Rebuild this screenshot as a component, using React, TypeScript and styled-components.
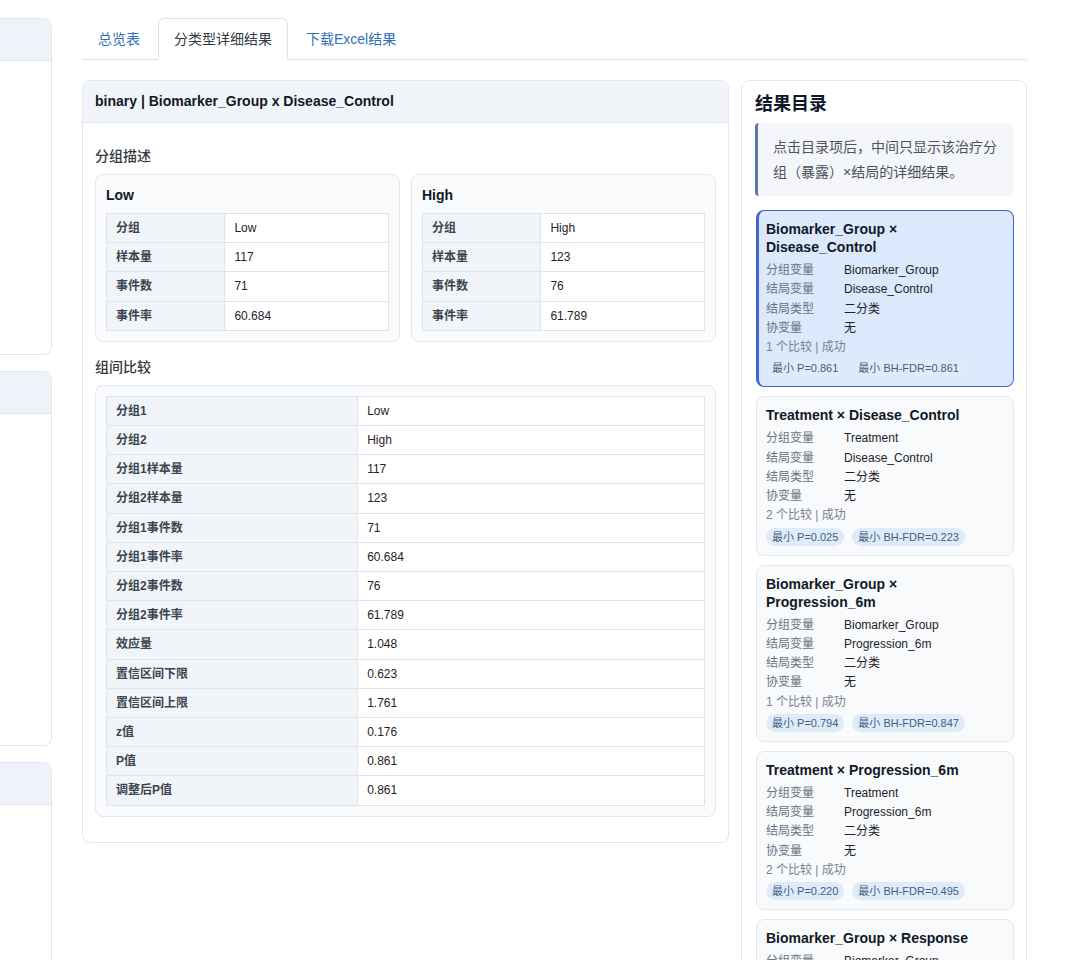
import React from 'react'
import styled, { createGlobalStyle } from 'styled-components';

const GlobalStyle = createGlobalStyle`
  body {
    margin: 0;
    background: #fff;
    color: #1f2328;
    font-family: "Liberation Sans", "Noto Sans CJK SC", sans-serif;
  }
  * { box-sizing: border-box; }
`;

const Page = styled.div`
  display: flex;
  gap: 30px;
  width: 1090px;
  height: 960px;
  padding-top: 18px;
  overflow: hidden;
`;

const SideColumn = styled.div`
  width: 52px;
  flex-shrink: 0;
  display: flex;
  flex-direction: column;
  gap: 16px;
`;

const SidePanel = styled.div<{ h: number }>`
  height: ${props => props.h}px;
  flex-shrink: 0;
  border: 1px solid #e2e7ee;
  border-left: none;
  border-radius: 0 8px 8px 0;
`;

const SidePanelHeader = styled.div`
  height: 42px;
  background: #eef3f9;
  border-bottom: 1px solid #e2e7ee;
  border-radius: 0 8px 0 0;
`;

const Content = styled.div`
  width: 945px;
  flex-shrink: 0;
`;

const Tabs = styled.div`
  display: flex;
  gap: 2px;
  border-bottom: 1px solid #dee2e6;
`;

const Tab = styled.div<{ active?: boolean }>`
  padding: 10px 15px;
  font-size: 14px;
  line-height: 20px;
  margin-bottom: -1px;
  border: 1px solid ${props => props.active ? '#dee2e6' : 'transparent'};
  border-bottom-color: ${props => props.active ? '#fff' : 'transparent'};
  border-radius: 6px 6px 0 0;
  background: ${props => props.active ? '#fff' : 'transparent'};
  color: ${props => props.active ? '#333a42' : '#3470b8'};
`;

const Body = styled.div`
  display: flex;
  align-items: flex-start;
  gap: 12px;
  margin-top: 20px;
`;

const ResultCard = styled.div`
  flex: 1;
  border: 1px solid #e2e7ee;
  border-radius: 8px;
  overflow: hidden;
`;

const ResultHeader = styled.div`
  padding: 12px;
  background: #f1f5f9;
  border-bottom: 1px solid #e2e7ee;
  font-size: 14px;
  line-height: 17px;
  font-weight: bold;
  color: #111827;
`;

const ResultBody = styled.div`
  padding: 23px 12px 25px;
`;

const SectionTitle = styled.div<{ first?: boolean }>`
  margin: ${props => props.first ? 0 : 15}px 0 8px;
  font-size: 14px;
  line-height: 20px;
  font-weight: 500;
  color: #333a42;
`;

const GroupGrid = styled.div`
  display: grid;
  grid-template-columns: 1fr 1fr;
  gap: 11px;
`;

const InnerCard = styled.div`
  padding: 10px;
  background: #f9fbfd;
  border: 1px solid #e2e7ee;
  border-radius: 8px;
`;

const GroupName = styled.div`
  margin-bottom: 8px;
  font-size: 14px;
  line-height: 20px;
  font-weight: bold;
  color: #111827;
`;

const KvTable = styled.table`
  width: 100%;
  border-collapse: collapse;
  background: #fff;
  font-size: 12px;
  line-height: 16.2px;
`;

const LabelCell = styled.th`
  width: 42%;
  padding: 6px 9px;
  text-align: left;
  font-weight: 600;
  color: #3b4450;
  background: #f1f4f8;
  border: 1px solid #dfe4ea;
`;

const ValueCell = styled.td`
  padding: 6px 9px;
  color: #1f2328;
  border: 1px solid #dfe4ea;
`;

const Catalog = styled.div`
  width: 286px;
  flex-shrink: 0;
  padding: 11px 12px 40px 13px;
  border: 1px solid #e2e7ee;
  border-radius: 8px;
`;

const CatalogTitle = styled.div`
  margin-bottom: 7px;
  font-size: 18px;
  line-height: 24px;
  font-weight: bold;
  color: #111827;
`;

const Note = styled.div`
  padding: 12px 12px 11px 15px;
  background: #f4f6fa;
  border-left: 3px solid #5b78a8;
  border-radius: 4px 6px 6px 4px;
  font-size: 14px;
  line-height: 25px;
  color: #4a5260;
`;

const ItemList = styled.div`
  display: flex;
  flex-direction: column;
  gap: 9px;
  margin-top: 14px;
  padding-left: 1px;
`;

const Item = styled.div<{ active?: boolean }>`
  padding: 9px 9px 9px ${props => props.active ? 7 : 9}px;
  background: ${props => props.active ? '#dce8fb' : '#f8fafc'};
  border: 1px solid ${props => props.active ? '#3f63cf' : '#e2e7ee'};
  border-left-width: ${props => props.active ? 3 : 1}px;
  border-radius: 8px;
`;

const ItemTitle = styled.div`
  margin-bottom: 5px;
  font-size: 14px;
  line-height: 18px;
  font-weight: bold;
  color: #111827;
`;

const Meta = styled.div`
  display: grid;
  grid-template-columns: 78px 1fr;
  font-size: 12px;
  line-height: 19.25px;
`;

const MetaLabel = styled.div`
  color: #6b7280;
`;

const MetaValue = styled.div`
  color: #1f2328;
`;

const Summary = styled.div`
  font-size: 12px;
  line-height: 19.25px;
  color: #7b8290;
`;

const Badges = styled.div`
  display: flex;
  gap: 8px;
  margin-top: 2px;
`;

const Badge = styled.span`
  padding: 2px 6px;
  font-size: 11px;
  line-height: 14px;
  color: #3d5f86;
  background: #e0ebf9;
  border-radius: 9px;
`;

const groups = [
  { name: 'Low', rows: [['分组', 'Low'], ['样本量', '117'], ['事件数', '71'], ['事件率', '60.684']] },
  { name: 'High', rows: [['分组', 'High'], ['样本量', '123'], ['事件数', '76'], ['事件率', '61.789']] },
];

const comparison = [
  ['分组1', 'Low'],
  ['分组2', 'High'],
  ['分组1样本量', '117'],
  ['分组2样本量', '123'],
  ['分组1事件数', '71'],
  ['分组1事件率', '60.684'],
  ['分组2事件数', '76'],
  ['分组2事件率', '61.789'],
  ['效应量', '1.048'],
  ['置信区间下限', '0.623'],
  ['置信区间上限', '1.761'],
  ['z值', '0.176'],
  ['P值', '0.861'],
  ['调整后P值', '0.861'],
];

const items = [
  { group: 'Biomarker_Group', outcome: 'Disease_Control', n: 1, p: '0.861', fdr: '0.861', active: true },
  { group: 'Treatment', outcome: 'Disease_Control', n: 2, p: '0.025', fdr: '0.223' },
  { group: 'Biomarker_Group', outcome: 'Progression_6m', n: 1, p: '0.794', fdr: '0.847' },
  { group: 'Treatment', outcome: 'Progression_6m', n: 2, p: '0.220', fdr: '0.495' },
  { group: 'Biomarker_Group', outcome: 'Response', n: 1, p: '0.412', fdr: '0.655' },
];

const KeyValueTable = ({ rows }: { rows: string[][] }) => (
  <KvTable>
    <tbody>
      {rows.map(([k, v]) => (
        <tr key={k}>
          <LabelCell>{k}</LabelCell>
          <ValueCell>{v}</ValueCell>
        </tr>
      ))}
    </tbody>
  </KvTable>
);

type ItemProps = typeof items[number];

const CatalogItem = ({ group, outcome, n, p, fdr, active }: ItemProps) => (
  <Item active={active}>
    <ItemTitle>{group} × {outcome}</ItemTitle>
    <Meta>
      <MetaLabel>分组变量</MetaLabel><MetaValue>{group}</MetaValue>
      <MetaLabel>结局变量</MetaLabel><MetaValue>{outcome}</MetaValue>
      <MetaLabel>结局类型</MetaLabel><MetaValue>二分类</MetaValue>
      <MetaLabel>协变量</MetaLabel><MetaValue>无</MetaValue>
    </Meta>
    <Summary>{n} 个比较 | 成功</Summary>
    <Badges>
      <Badge>最小 P={p}</Badge>
      <Badge>最小 BH-FDR={fdr}</Badge>
    </Badges>
  </Item>
);

const App = () => (
  <React.Fragment>
    <GlobalStyle />
    <Page>
      <SideColumn>
        <SidePanel h={337}><SidePanelHeader /></SidePanel>
        <SidePanel h={375}><SidePanelHeader /></SidePanel>
        <SidePanel h={300}><SidePanelHeader /></SidePanel>
      </SideColumn>

      <Content>
        <Tabs>
          <Tab>总览表</Tab>
          <Tab active>分类型详细结果</Tab>
          <Tab>下载Excel结果</Tab>
        </Tabs>

        <Body>
          <ResultCard>
            <ResultHeader>binary | Biomarker_Group x Disease_Control</ResultHeader>
            <ResultBody>
              <SectionTitle first>分组描述</SectionTitle>
              <GroupGrid>
                {groups.map(g => (
                  <InnerCard key={g.name}>
                    <GroupName>{g.name}</GroupName>
                    <KeyValueTable rows={g.rows} />
                  </InnerCard>
                ))}
              </GroupGrid>

              <SectionTitle>组间比较</SectionTitle>
              <InnerCard>
                <KeyValueTable rows={comparison} />
              </InnerCard>
            </ResultBody>
          </ResultCard>

          <Catalog>
            <CatalogTitle>结果目录</CatalogTitle>
            <Note>点击目录项后，中间只显示该治疗分组（暴露）×结局的详细结果。</Note>
            <ItemList>
              {items.map(item => (
                <CatalogItem key={item.group + item.outcome} {...item} />
              ))}
            </ItemList>
          </Catalog>
        </Body>
      </Content>
    </Page>
  </React.Fragment>
);

export default App;
